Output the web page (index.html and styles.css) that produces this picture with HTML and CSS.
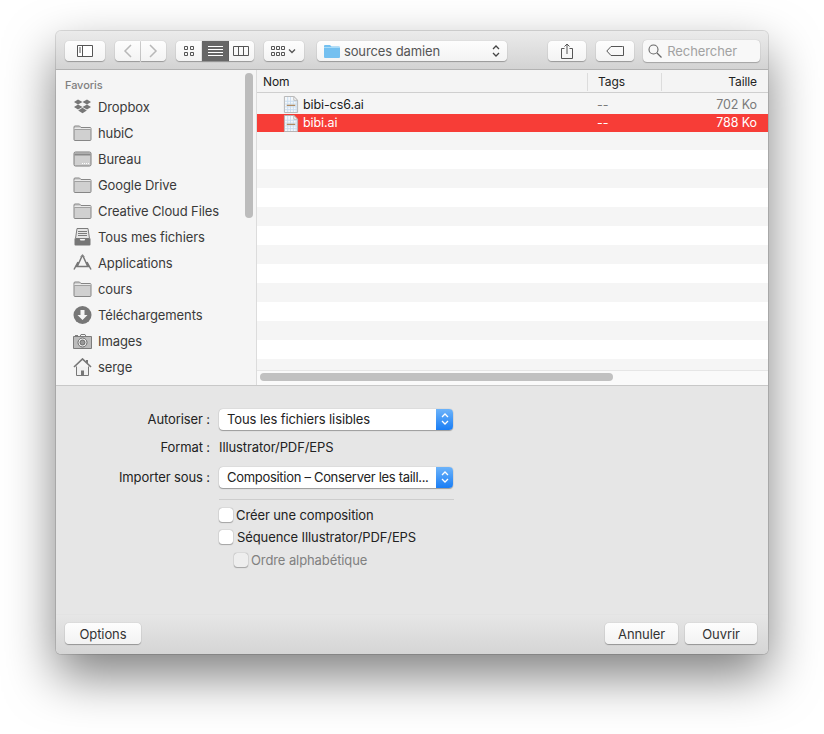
FILE: index.html
```html
<!DOCTYPE html>
<html lang="fr">
<head>
<meta charset="utf-8">
<title>Ouvrir</title>
<link rel="stylesheet" href="styles.css">
</head>
<body>
<svg class="defs" width="0" height="0" aria-hidden="true">
  <symbol id="folder" viewBox="0 0 19 16">
    <path d="M1 14.500V2a1 1 0 0 1 1-1h4.500L8 2.500h9a1 1 0 0 1 1 1v11a1 1 0 0 1-1 1H2a1 1 0 0 1-1-1z" fill="#d0d0d0" stroke="#868686"/>
    <path d="M1.500 4.500h16" stroke="#a0a0a0" fill="none"/>
    <path d="M1.500 3.500h16" stroke="#e9e9e9" fill="none"/>
  </symbol>
  <symbol id="doc" viewBox="0 0 17 18">
    <path d="M1.500 .5h10l4 4v13h-14z" fill="#f4f7fa" stroke="#b4b4b4"/>
    <path d="M2 5.500h13M2 8.500h13M2 11.500h13M2 14.500h13M5 1v16M8 1v16M11 5v12M14 5v12" stroke="#c9dcef" fill="none"/>
    <path d="M11.500 .5v4h4z" fill="#fff" stroke="#b4b4b4"/>
    <path d="M4 10h9" stroke="#b08a60" stroke-width="1.400"/>
  </symbol>
  <symbol id="updown" viewBox="0 0 8 14">
    <path d="M1 5l3-3 3 3M1 9l3 3 3-3" fill="none" stroke="currentColor" stroke-width="1.300"/>
  </symbol>
</svg>

<main class="window">
  <header class="toolbar">
    <button class="tbtn w40" aria-label="Barre latérale">
      <svg width="16" height="12" viewBox="0 0 16 12"><path d="M.5.500h15v11H.5zM5.500.500v11" fill="#fff" stroke="#555"/><path d="M2 3h2M2 5h2M2 7h2" stroke="#555"/></svg>
    </button>
    <div class="group gap10">
      <div class="group">
        <button class="tbtn w25 left" aria-label="Précédent"><svg width="9" height="14" viewBox="0 0 9 14"><path d="M8 1L2 7l6 6" fill="none" stroke="#b8b8b8" stroke-width="1.500"/></svg></button>
        <button class="tbtn w25 right" aria-label="Suivant"><svg width="9" height="14" viewBox="0 0 9 14"><path d="M1 1l6 6-6 6" fill="none" stroke="#b8b8b8" stroke-width="1.500"/></svg></button>
      </div>
      <div class="group seg">
        <button class="tbtn w26 left" aria-label="Icônes"><svg width="10" height="10" viewBox="0 0 10 10"><path d="M.5.500h3v3h-3zM6.500.500h3v3h-3zM.5 6.500h3v3h-3zM6.500 6.500h3v3h-3z" fill="none" stroke="#555"/></svg></button>
        <button class="tbtn w26 mid on" aria-label="Liste"><svg width="15" height="10" viewBox="0 0 15 10"><path d="M0 .5h15M0 3.500h15M0 6.500h15M0 9.500h15" stroke="#fff"/></svg></button>
        <button class="tbtn w25 right" aria-label="Colonnes"><svg width="16" height="10" viewBox="0 0 16 10"><path d="M.5.500h15v9H.5zM5.500.500v9M10.500.500v9" fill="none" stroke="#555"/></svg></button>
      </div>
      <button class="tbtn w40 arrange" aria-label="Organiser">
        <svg width="26" height="12" viewBox="0 0 26 12"><path d="M.5 1.500h3v3h-3zM5.500 1.500h3v3h-3zM10.500 1.500h3v3h-3zM.5 7.500h3v3h-3zM5.500 7.500h3v3h-3zM10.500 7.500h3v3h-3z" fill="none" stroke="#555"/><path d="M18 4.500l3 3 3-3" fill="none" stroke="#555" stroke-width="1.300"/></svg>
      </button>
    </div>
    <button class="tbtn path">
      <svg class="pfolder" width="16" height="14" viewBox="0 0 16 14"><path d="M0 2a1 1 0 0 1 1-1h5l1.500 1.500H15a1 1 0 0 1 1 1V13a1 1 0 0 1-1 1H1a1 1 0 0 1-1-1z" fill="#74c0f0"/><path d="M0 3.500h16" stroke="#a9dcf8"/></svg>
      <span class="pname">sources damien</span>
      <svg class="pupdown" width="8" height="14"><use href="#updown"/></svg>
    </button>
    <button class="tbtn w38" aria-label="Partager"><svg width="12" height="16" viewBox="0 0 12 16"><path d="M3.500 5.500H.5v10h11v-10h-3" fill="none" stroke="#555"/><path d="M6 11V1M3.500 3.500L6 1l2.500 2.500" fill="none" stroke="#555"/></svg></button>
    <button class="tbtn w38" aria-label="Étiquette"><svg width="18" height="10" viewBox="0 0 18 10"><path d="M5 .5h11.500a1 1 0 0 1 1 0v9H5L.8 5z" fill="none" stroke="#555"/></svg></button>
    <label class="search">
      <svg width="14" height="14" viewBox="0 0 14 14"><circle cx="5.500" cy="5.500" r="4.500" fill="none" stroke="#666" stroke-width="1.100"/><path d="M9 9l4.500 4.500" stroke="#666" stroke-width="1.300"/></svg>
      <span>Rechercher</span>
    </label>
  </header>

  <section class="browser">
    <nav class="sidebar">
      <h2 class="side-title">Favoris</h2>
      <ul class="places">
        <li><svg class="pi" viewBox="0 0 19 16"><path d="M5 .5L1 3l4 2.500L9.500 3zM14 .5L9.500 3 14 5.500 18 3zM5 5.500L1 8l4 2.500L9.500 8zM14 5.500L9.500 8l4.500 2.500L18 8zM5.200 11.500l4.300 2.700 4.300-2.700-4.300-2.700z" fill="#777"/></svg>Dropbox</li>
        <li><svg class="pi"><use href="#folder"/></svg>hubiC</li>
        <li><svg class="pi" viewBox="0 0 19 16"><rect x="1" y="1" width="17" height="14" rx="1.500" fill="#d0d0d0" stroke="#7c7c7c"/><path d="M1.500 3.500h16" stroke="#8a8a8a" stroke-width="2"/><path d="M9 12.500h1M11 12.500h1M13 12.500h1M15 12.500h1" stroke="#fff"/></svg>Bureau</li>
        <li><svg class="pi"><use href="#folder"/></svg>Google Drive</li>
        <li><svg class="pi"><use href="#folder"/></svg>Creative Cloud Files</li>
        <li><svg class="pi tall" viewBox="0 0 19 18"><path d="M4 .5h11l1.500 10h-14z" fill="#e6e6e6" stroke="#7c7c7c"/><path d="M5 3.500h9M5 5.500h9M5 7.500h9" stroke="#7c7c7c"/><path d="M1.500 10.500h5l1 2h4l1-2h5v6a1 1 0 0 1-1 1h-14a1 1 0 0 1-1-1z" fill="#777"/></svg>Tous mes fichiers</li>
        <li><svg class="pi tall" viewBox="0 0 19 18"><path d="M9.500 1L4 13M9.500 1L15 13M1 15.500L5 8M18 15.500L14 8M2 12.500h15" fill="none" stroke="#777" stroke-width="1.500"/><path d="M7.500 3l2-2.500L11.500 3" fill="none" stroke="#999"/></svg>Applications</li>
        <li><svg class="pi"><use href="#folder"/></svg>cours</li>
        <li><svg class="pi tall" viewBox="0 0 18 18"><circle cx="9" cy="9" r="9" fill="#777"/><path d="M7 4h4v5h3l-5 5-5-5h3z" fill="#f5f5f5"/></svg>Téléchargements</li>
        <li><svg class="pi" viewBox="0 0 19 16"><path d="M.5 3.500h18v12H.5z" fill="#bcbcbc" stroke="#7c7c7c"/><path d="M2 2.500h3M7 3.500l1-2h4l1 2" fill="none" stroke="#7c7c7c"/><circle cx="9.500" cy="9.500" r="4.500" fill="#eee" stroke="#6c6c6c"/><circle cx="9.500" cy="9.500" r="2.500" fill="#999" stroke="#6c6c6c"/></svg>Images</li>
        <li><svg class="pi tall" viewBox="0 0 19 18"><path d="M1 9l8.500-8L18 9" fill="none" stroke="#777" stroke-width="1.700"/><path d="M14 2v3" stroke="#777" stroke-width="2"/><path d="M3.500 8.500v9h12v-9" fill="#f0f0f0" stroke="#777"/><path d="M8 17.500v-5h3v5z" fill="#777"/></svg>serge</li>
        <li><svg class="pi"><rect x="3" y="1" width="13" height="15" rx="2" fill="#999"/></svg></li>
      </ul>
      <div class="vthumb"></div>
    </nav>
    <div class="files">
      <div class="thead">
        <span class="c-name">Nom</span>
        <span class="c-tags">Tags</span>
        <span class="c-size">Taille</span>
      </div>
      <div class="tbody">
        <div class="row first"><span class="c-name"><svg class="doc"><use href="#doc"/></svg>bibi-cs6.ai</span><span class="c-tags dim">--</span><span class="c-size dim">702 Ko</span></div>
        <div class="row sel"><span class="c-name"><svg class="doc"><use href="#doc"/></svg>bibi.ai</span><span class="c-tags">--</span><span class="c-size">788 Ko</span></div>
      </div>
      <div class="hbar"><div class="hthumb"></div></div>
    </div>
  </section>

  <section class="options">
    <div class="frow r-allow">
      <span class="flabel">Autoriser :</span>
      <div class="popup"><span>Tous les fichiers lisibles</span><i class="stepper"><svg width="8" height="14"><use href="#updown"/></svg></i></div>
    </div>
    <div class="frow r-format">
      <span class="flabel">Format :</span>
      <span class="fvalue">Illustrator/PDF/EPS</span>
    </div>
    <div class="frow r-import">
      <span class="flabel">Importer sous :</span>
      <div class="popup"><span class="tight">Composition – Conserver les taill...</span><i class="stepper"><svg width="8" height="14"><use href="#updown"/></svg></i></div>
    </div>
    <hr class="sep">
    <label class="check c1"><i class="box"></i>Créer une composition</label>
    <label class="check c2"><i class="box"></i>Séquence Illustrator/PDF/EPS</label>
    <label class="check c3 off"><i class="box"></i>Ordre alphabétique</label>
  </section>

  <footer class="actions">
    <button class="pbtn w-opt">Options</button>
    <span class="spacer"></span>
    <button class="pbtn w-ann">Annuler</button>
    <button class="pbtn w-ouv">Ouvrir</button>
  </footer>
</main>
</body>
</html>
```

FILE: styles.css
```css
* { box-sizing: border-box; }
html, body { margin: 0; height: 100%; background: #fff; overflow: hidden; }
body {
  font: 13px/16px Inter, Roboto, "Liberation Sans", sans-serif;
  letter-spacing: -.1px;
  color: #2b2b2b;
  padding: 31px 0 0 56px;
}
.defs { position: absolute; }
button { font: inherit; color: inherit; margin: 0; padding: 0; letter-spacing: inherit; }
ul, h2 { margin: 0; padding: 0; list-style: none; }

.window {
  width: 712px;
  height: 623px;
  display: flex;
  flex-direction: column;
  border-radius: 5px;
  overflow: hidden;
  background: #e6e6e6;
  box-shadow: 0 22px 50px rgba(0,0,0,.5), 0 0 0 1px rgba(0,0,0,.12);
}

/* toolbar */
.toolbar {
  height: 39px;
  flex: none;
  display: flex;
  align-items: center;
  padding: 2px 8px 0 9px;
  background: linear-gradient(#ebebeb, #d3d3d3);
  border-bottom: 1px solid #b2b2b2;
}
.group { display: flex; }
.gap10 { gap: 10px; margin-left: 10px; }
.tbtn {
  height: 20px;
  display: flex;
  align-items: center;
  justify-content: center;
  background: linear-gradient(#fdfdfd, #f3f3f3);
  border: 0;
  border-radius: 4px;
  box-shadow: 0 1px 1px rgba(0,0,0,.28), 0 0 1px rgba(0,0,0,.25);
}
.w40 { width: 40px; }
.w38 { width: 38px; margin-left: 10px; }
.w26 { width: 26px; }
.w25 { width: 25px; }
.seg .w26 + .w26 { width: 27px; }
.left { border-radius: 4px 0 0 4px; }
.right { border-radius: 0 4px 4px 0; margin-left: 1px; }
.seg .right { margin-left: 0; }
.mid { border-radius: 0; }
.on { background: #666; }
.arrange { margin-left: 0; }
.path {
  width: 191px;
  margin-left: 13px;
  margin-right: 31px;
  padding: 0 7px;
  justify-content: flex-start;
  color: #555;
}
.path + .w38 { margin-left: 10px; }
.pname { margin-left: 4px; }
.pupdown { margin-left: auto; color: #444; }
.search {
  width: 117px;
  height: 22px;
  margin-left: 9px;
  display: flex;
  align-items: center;
  gap: 5px;
  padding: 0 5px;
  color: #a2a2a2;
  background: #f8f8f8;
  border-radius: 4px;
  box-shadow: 0 1px 1px rgba(0,0,0,.22), 0 0 1px rgba(0,0,0,.25);
}

/* browser */
.browser {
  height: 316px;
  flex: none;
  display: flex;
  border-bottom: 1px solid #c8c8c8;
}
.sidebar {
  position: relative;
  width: 201px;
  flex: none;
  overflow: hidden;
  padding: 9px 0 0 9px;
  background: #f5f5f5;
  border-right: 1px solid #dcdcdc;
  color: #3a3a3a;
}
.side-title {
  font-size: 11px;
  font-weight: 500;
  line-height: 12px;
  color: #7f7f7f;
}
.places { margin-top: 3px; }
.places li {
  height: 26px;
  display: flex;
  align-items: center;
  padding-left: 8px;
  white-space: nowrap;
}
.pi { width: 19px; height: 16px; margin-right: 6px; flex: none; }
.pi.tall { height: 18px; }
.vthumb {
  position: absolute;
  left: 189px; top: 3px;
  width: 8px; height: 145px;
  border-radius: 4px;
  background: #bcbcbc;
}

.files {
  flex: 1;
  min-width: 0;
  display: flex;
  flex-direction: column;
  background: #fff;
}
.thead, .row { display: flex; align-items: center; }
.thead {
  height: 23px;
  flex: none;
  padding-top: 1px;
  background: #f4f4f4;
  border-bottom: 1px solid #cfcfcf;
  color: #222;
  font-size: 12px;
}
.c-name { width: 330px; padding-left: 6px; display: flex; align-items: center; }
.c-tags { width: 74px; padding-left: 10px; }
.c-size { width: 107px; padding-right: 11px; text-align: right; }
.thead .c-tags, .thead .c-size {
  border-left: 1px solid #dcdcdc;
  height: 18px;
  line-height: 18px;
}
.tbody {
  flex: 1;
  background: repeating-linear-gradient(#f5f5f5 0 19px, #fff 19px 38px);
}
.row { height: 18px; color: #1c1c1c; font-size: 12.5px; }
.row.first { height: 21px; padding-top: 2px; background: #f5f5f5; }
.row .c-name { padding-left: 26px; gap: 4px; }
.doc { width: 16px; height: 17px; flex: none; }
.dim { color: #7a7a7a; }
.sel { background: #f73d37; color: #fff; }
.hbar {
  height: 15px;
  flex: none;
  padding: 2px 0 0 3px;
  background: #fafafa;
  border-top: 1px solid #e6e6e6;
}
.hthumb { width: 353px; height: 8px; border-radius: 4px; background: #c1c1c1; }

/* options */
.options {
  flex: 1;
  padding-top: 22px;
  background: #e6e6e6;
}
.frow { display: flex; align-items: center; height: 22px; }
.flabel { width: 154px; text-align: right; color: #222; }
.popup {
  width: 234px;
  height: 21px;
  margin-left: 9px;
  display: flex;
  align-items: center;
  justify-content: space-between;
  padding-left: 8px;
  background: #fff;
  border-radius: 4px;
  box-shadow: 0 1px 1px rgba(0,0,0,.3), 0 0 1px rgba(0,0,0,.35);
  overflow: hidden;
  color: #222;
}
.tight { letter-spacing: -.3px; }
.stepper {
  width: 17px;
  height: 21px;
  display: flex;
  align-items: center;
  justify-content: center;
  color: #fff;
  background: linear-gradient(#6cb3fa, #1a7ef5);
}
.fvalue { margin-left: 9px; color: #222; }
.r-format { margin-top: 6px; }
.r-import { margin-top: 8px; }
.sep {
  width: 235px;
  margin: 11px 0 0 163px;
  border: 0;
  border-top: 1px solid #cdcdcd;
}
.check {
  display: flex;
  align-items: center;
  gap: 3px;
  height: 16px;
  color: #222;
}
.box {
  width: 14px;
  height: 14px;
  border-radius: 3px;
  background: #fff;
  box-shadow: 0 1px 1px rgba(0,0,0,.25), 0 0 1px rgba(0,0,0,.5);
}
.c1 { margin: 7px 0 0 163px; }
.c2 { margin: 6px 0 0 163px; gap: 4px; }
.c3 { margin: 7px 0 0 178px; }
.off { color: #808080; }
.off .box { background: #eee; }

/* footer */
.actions {
  height: 40px;
  flex: none;
  display: flex;
  align-items: flex-start;
  gap: 7px;
  padding: 8px 11px 0 9px;
  background: linear-gradient(#e6e6e6, #d5d5d5);
  border-top: 1px solid #e3e3e3;
}
.spacer { flex: 1; }
.pbtn {
  height: 21px;
  background: linear-gradient(#fdfdfd, #f3f3f3);
  border: 0;
  border-radius: 4px;
  box-shadow: 0 1px 1px rgba(0,0,0,.3), 0 0 1px rgba(0,0,0,.3);
  color: #333;
}
.w-opt { width: 76px; }
.w-ann { width: 73px; }
.w-ouv { width: 72px; }
```
